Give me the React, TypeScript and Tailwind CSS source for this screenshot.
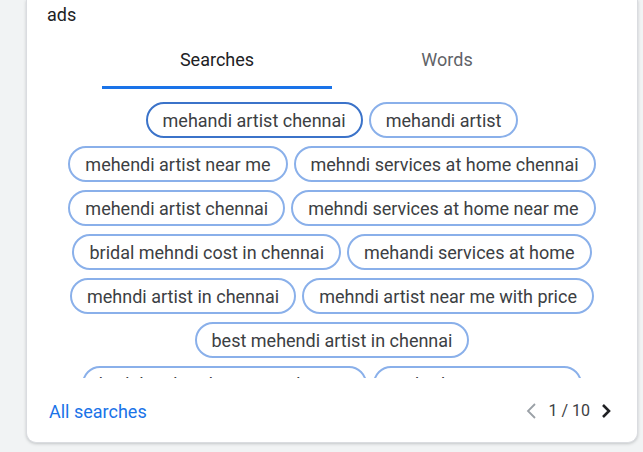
import React from "react";

const chips = [
  "mehandi artist chennai",
  "mehandi artist",
  "mehendi artist near me",
  "mehndi services at home chennai",
  "mehendi artist chennai",
  "mehndi services at home near me",
  "bridal mehndi cost in chennai",
  "mehandi services at home",
  "mehndi artist in chennai",
  "mehndi artist near me with price",
  "best mehendi artist in chennai",
  "bridal mehendi artist in chennai",
  "mehndi artist near me",
];

export default function App() {
  return (
    <div
      className="w-[643px] h-[452px] bg-[#f1f3f4] overflow-hidden"
      style={{ fontFamily: "Roboto, 'Liberation Sans', Arial, sans-serif" }}
    >
      <div className="ml-[26px] w-[612px] bg-white border border-t-0 border-[#dadce0] rounded-b-[10px] shadow-[0_1px_3px_rgba(60,64,67,0.25)]">
        <div className="pl-[20px] pt-[3px] text-[18px] leading-[24px] text-[#202124]">ads</div>

        <div className="mx-auto mt-[3px] flex w-[460px]">
          <div className="relative flex h-[59px] w-[230px] items-center justify-center text-[18px] text-[#202124]">
            Searches
            <span className="absolute bottom-0 left-0 right-0 h-[3px] bg-[#1a73e8]" />
          </div>
          <div className="flex h-[59px] w-[230px] items-center justify-center text-[18px] text-[#5f6368]">
            Words
          </div>
        </div>

        <div className="mx-auto mt-[13px] h-[276px] w-[542px] overflow-hidden">
          <div className="flex flex-wrap justify-center gap-x-[6px] gap-y-2">
            {chips.map((c, i) => (
              <span
                key={c}
                className={`flex h-9 items-center rounded-full border-2 px-[15px] text-[18px] whitespace-nowrap text-[#3c4043] ${
                  i === 0 ? "border-[#3b73c9]" : "border-[#8ab0ea]"
                }`}
              >
                {c}
              </span>
            ))}
          </div>
        </div>

        <div className="mt-[21px] flex h-[24px] items-center justify-between pl-[22px] pr-[24px]">
          <a className="text-[18px] text-[#1a73e8]">All searches</a>
          <div className="flex items-center gap-[9px] text-[16px] text-[#3c4043]">
            <svg width="14" height="18" viewBox="0 0 14 18" fill="none">
              <path d="M10 2 L3 9 L10 16" stroke="#9aa0a6" strokeWidth="1.8" />
            </svg>
            <span>1 / 10</span>
            <svg width="14" height="18" viewBox="0 0 14 18" fill="none">
              <path d="M4 3 L10 9 L4 15" stroke="#202124" strokeWidth="2.6" />
            </svg>
          </div>
        </div>
        <div className="h-[19px]" />
      </div>
    </div>
  );
}
